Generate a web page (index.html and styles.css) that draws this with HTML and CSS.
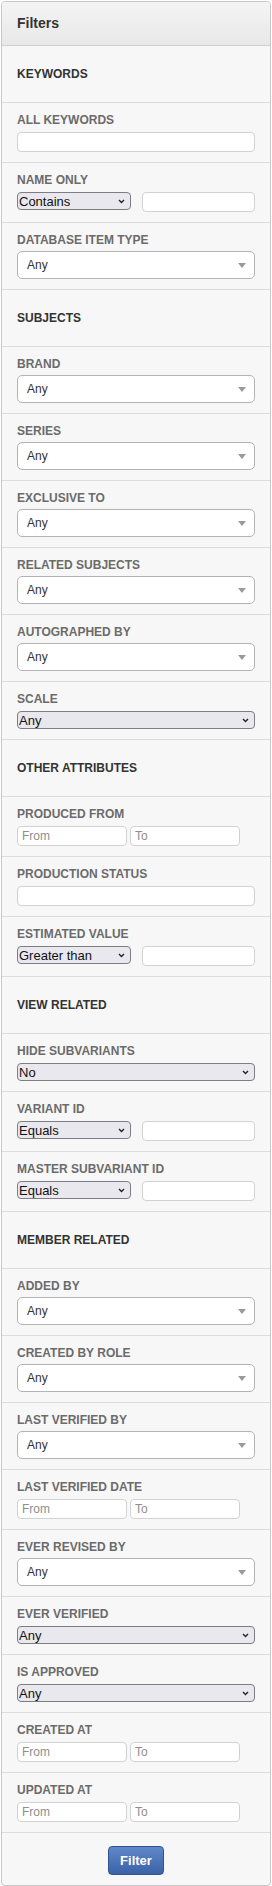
FILE: index.html
```html
<!DOCTYPE html>
<html lang="en">
<head>
    <meta charset="UTF-8">
    <meta name="viewport" content="width=device-width, initial-scale=1.0">
    <title>Filters</title>
    <link rel="stylesheet" href="styles.css">
</head>
<body>
    <form class="panel" action="#" method="get">
        <!-- Panel Header -->
        <div class="panel-head">Filters</div>

        <!-- Keywords -->
        <div class="group-title">KEYWORDS</div>

        <div class="field">
            <label>ALL KEYWORDS</label>
            <input type="text" class="text-input">
        </div>

        <div class="field">
            <label>NAME ONLY</label>
            <div class="pair">
                <div class="native">
                    <select><option>Contains</option></select>
                    <svg class="chev" width="7" height="5" viewBox="0 0 7 5"><path d="M1 1l2.5 2.5L6 1" fill="none" stroke="#222" stroke-width="1.4"/></svg>
                </div>
                <input type="text" class="text-input">
            </div>
        </div>

        <div class="field">
            <label>DATABASE ITEM TYPE</label>
            <div class="chosen"><span>Any</span><svg width="8" height="5" viewBox="0 0 8 5"><path d="M0 0h8L4 5z" fill="#9a9a9a"/></svg></div>
        </div>

        <!-- Subjects -->
        <div class="group-title">SUBJECTS</div>

        <div class="field">
            <label>BRAND</label>
            <div class="chosen"><span>Any</span><svg width="8" height="5" viewBox="0 0 8 5"><path d="M0 0h8L4 5z" fill="#9a9a9a"/></svg></div>
        </div>

        <div class="field">
            <label>SERIES</label>
            <div class="chosen"><span>Any</span><svg width="8" height="5" viewBox="0 0 8 5"><path d="M0 0h8L4 5z" fill="#9a9a9a"/></svg></div>
        </div>

        <div class="field">
            <label>EXCLUSIVE TO</label>
            <div class="chosen"><span>Any</span><svg width="8" height="5" viewBox="0 0 8 5"><path d="M0 0h8L4 5z" fill="#9a9a9a"/></svg></div>
        </div>

        <div class="field">
            <label>RELATED SUBJECTS</label>
            <div class="chosen"><span>Any</span><svg width="8" height="5" viewBox="0 0 8 5"><path d="M0 0h8L4 5z" fill="#9a9a9a"/></svg></div>
        </div>

        <div class="field">
            <label>AUTOGRAPHED BY</label>
            <div class="chosen"><span>Any</span><svg width="8" height="5" viewBox="0 0 8 5"><path d="M0 0h8L4 5z" fill="#9a9a9a"/></svg></div>
        </div>

        <div class="field">
            <label>SCALE</label>
            <div class="native">
                <select><option>Any</option></select>
                <svg class="chev" width="7" height="5" viewBox="0 0 7 5"><path d="M1 1l2.5 2.5L6 1" fill="none" stroke="#222" stroke-width="1.4"/></svg>
            </div>
        </div>

        <!-- Other Attributes -->
        <div class="group-title">OTHER ATTRIBUTES</div>

        <div class="field">
            <label>PRODUCED FROM</label>
            <div class="range">
                <input type="text" class="text-input" placeholder="From">
                <input type="text" class="text-input" placeholder="To">
            </div>
        </div>

        <div class="field">
            <label>PRODUCTION STATUS</label>
            <input type="text" class="text-input">
        </div>

        <div class="field">
            <label>ESTIMATED VALUE</label>
            <div class="pair">
                <div class="native">
                    <select><option>Greater than</option></select>
                    <svg class="chev" width="7" height="5" viewBox="0 0 7 5"><path d="M1 1l2.5 2.5L6 1" fill="none" stroke="#222" stroke-width="1.4"/></svg>
                </div>
                <input type="text" class="text-input">
            </div>
        </div>

        <!-- View Related -->
        <div class="group-title">VIEW RELATED</div>

        <div class="field">
            <label>HIDE SUBVARIANTS</label>
            <div class="native">
                <select><option>No</option></select>
                <svg class="chev" width="7" height="5" viewBox="0 0 7 5"><path d="M1 1l2.5 2.5L6 1" fill="none" stroke="#222" stroke-width="1.4"/></svg>
            </div>
        </div>

        <div class="field">
            <label>VARIANT ID</label>
            <div class="pair">
                <div class="native">
                    <select><option>Equals</option></select>
                    <svg class="chev" width="7" height="5" viewBox="0 0 7 5"><path d="M1 1l2.5 2.5L6 1" fill="none" stroke="#222" stroke-width="1.4"/></svg>
                </div>
                <input type="text" class="text-input">
            </div>
        </div>

        <div class="field">
            <label>MASTER SUBVARIANT ID</label>
            <div class="pair">
                <div class="native">
                    <select><option>Equals</option></select>
                    <svg class="chev" width="7" height="5" viewBox="0 0 7 5"><path d="M1 1l2.5 2.5L6 1" fill="none" stroke="#222" stroke-width="1.4"/></svg>
                </div>
                <input type="text" class="text-input">
            </div>
        </div>

        <!-- Member Related -->
        <div class="group-title">MEMBER RELATED</div>

        <div class="field">
            <label>ADDED BY</label>
            <div class="chosen"><span>Any</span><svg width="8" height="5" viewBox="0 0 8 5"><path d="M0 0h8L4 5z" fill="#9a9a9a"/></svg></div>
        </div>

        <div class="field">
            <label>CREATED BY ROLE</label>
            <div class="chosen"><span>Any</span><svg width="8" height="5" viewBox="0 0 8 5"><path d="M0 0h8L4 5z" fill="#9a9a9a"/></svg></div>
        </div>

        <div class="field">
            <label>LAST VERIFIED BY</label>
            <div class="chosen"><span>Any</span><svg width="8" height="5" viewBox="0 0 8 5"><path d="M0 0h8L4 5z" fill="#9a9a9a"/></svg></div>
        </div>

        <div class="field">
            <label>LAST VERIFIED DATE</label>
            <div class="range">
                <input type="text" class="text-input" placeholder="From">
                <input type="text" class="text-input" placeholder="To">
            </div>
        </div>

        <div class="field">
            <label>EVER REVISED BY</label>
            <div class="chosen"><span>Any</span><svg width="8" height="5" viewBox="0 0 8 5"><path d="M0 0h8L4 5z" fill="#9a9a9a"/></svg></div>
        </div>

        <div class="field">
            <label>EVER VERIFIED</label>
            <div class="native">
                <select><option>Any</option></select>
                <svg class="chev" width="7" height="5" viewBox="0 0 7 5"><path d="M1 1l2.5 2.5L6 1" fill="none" stroke="#222" stroke-width="1.4"/></svg>
            </div>
        </div>

        <div class="field">
            <label>IS APPROVED</label>
            <div class="native">
                <select><option>Any</option></select>
                <svg class="chev" width="7" height="5" viewBox="0 0 7 5"><path d="M1 1l2.5 2.5L6 1" fill="none" stroke="#222" stroke-width="1.4"/></svg>
            </div>
        </div>

        <div class="field">
            <label>CREATED AT</label>
            <div class="range">
                <input type="text" class="text-input" placeholder="From">
                <input type="text" class="text-input" placeholder="To">
            </div>
        </div>

        <div class="field">
            <label>UPDATED AT</label>
            <div class="range">
                <input type="text" class="text-input" placeholder="From">
                <input type="text" class="text-input" placeholder="To">
            </div>
        </div>

        <!-- Footer -->
        <div class="panel-foot">
            <button type="submit" class="filter-button">Filter</button>
        </div>
    </form>
</body>
</html>
```

FILE: styles.css
```css
/* Global Styles */
body {
    font-family: 'Liberation Sans', Arial, sans-serif;
    margin: 0;
    padding: 0;
    background: #fff;
    color: #333;
}

/* Panel */
.panel {
    margin: 1px 1px 3px 1px;
    background: #f7f7f7;
    border: 1px solid #c9c9c9;
    border-radius: 4px;
    overflow: hidden;
}

.panel-head {
    background: linear-gradient(#f4f4f4, #e8e8e8);
    border-bottom: 1px solid #cfcfcf;
    padding: 13px 15px;
    font-size: 14px;
    line-height: 17px;
    font-weight: bold;
    color: #333;
}

/* Group Titles */
.group-title {
    padding: 20px 15px 20px 15px;
    font-size: 12px;
    line-height: 16px;
    font-weight: bold;
    color: #333;
    border-bottom: 1px solid #dcdcdc;
}

/* Fields */
.field {
    padding: 9px 15px 10px 15px;
    border-bottom: 1px solid #dcdcdc;
}

.field label {
    display: block;
    font-size: 12px;
    line-height: 16px;
    font-weight: bold;
    color: #6b6b6b;
    margin-bottom: 4px;
}

.text-input {
    display: block;
    width: 100%;
    height: 20px;
    box-sizing: border-box;
    margin: 0;
    padding: 0 4px;
    border: 1px solid #d2d2d2;
    border-radius: 4px;
    background: #fff;
    font-family: inherit;
    font-size: 12px;
    color: #333;
}

.text-input::placeholder {
    color: #8e8e8e;
}

/* Native select */
.native {
    position: relative;
    height: 18px;
}

.native select {
    -webkit-appearance: none;
    appearance: none;
    display: block;
    width: 100%;
    height: 18px;
    margin: 0;
    padding: 0 14px 0 1px;
    box-sizing: border-box;
    border: 1px solid #7d7d82;
    border-radius: 4px;
    background: #e9e8ee;
    font-family: inherit;
    font-size: 13px;
    color: #111;
}

.native .chev {
    position: absolute;
    right: 6px;
    top: 7px;
}

/* Select + input pair */
.pair {
    display: grid;
    grid-template-columns: minmax(0, 1fr) minmax(0, 1fr);
    align-items: start;
    column-gap: 11px;
}

/* From / To range */
.range {
    display: flex;
    gap: 3px;
}

.range .text-input {
    width: 110px;
}

/* Chosen-style select */
.chosen {
    display: flex;
    align-items: center;
    justify-content: space-between;
    height: 28px;
    margin-top: -1px;
    box-sizing: border-box;
    padding: 0 8px 0 9px;
    background: #fff;
    border: 1px solid #b4b4b4;
    border-radius: 5px;
    font-size: 12px;
    color: #333;
}

/* Footer */
.panel-foot {
    padding: 13px 15px 10px 15px;
    text-align: center;
}

.filter-button {
    height: 29px;
    padding: 0 11px;
    background: linear-gradient(#5f87c9, #3a62a6);
    border: 1px solid #2f5391;
    border-radius: 4px;
    color: #fff;
    font-family: inherit;
    font-size: 13px;
    font-weight: bold;
    cursor: pointer;
}
```
